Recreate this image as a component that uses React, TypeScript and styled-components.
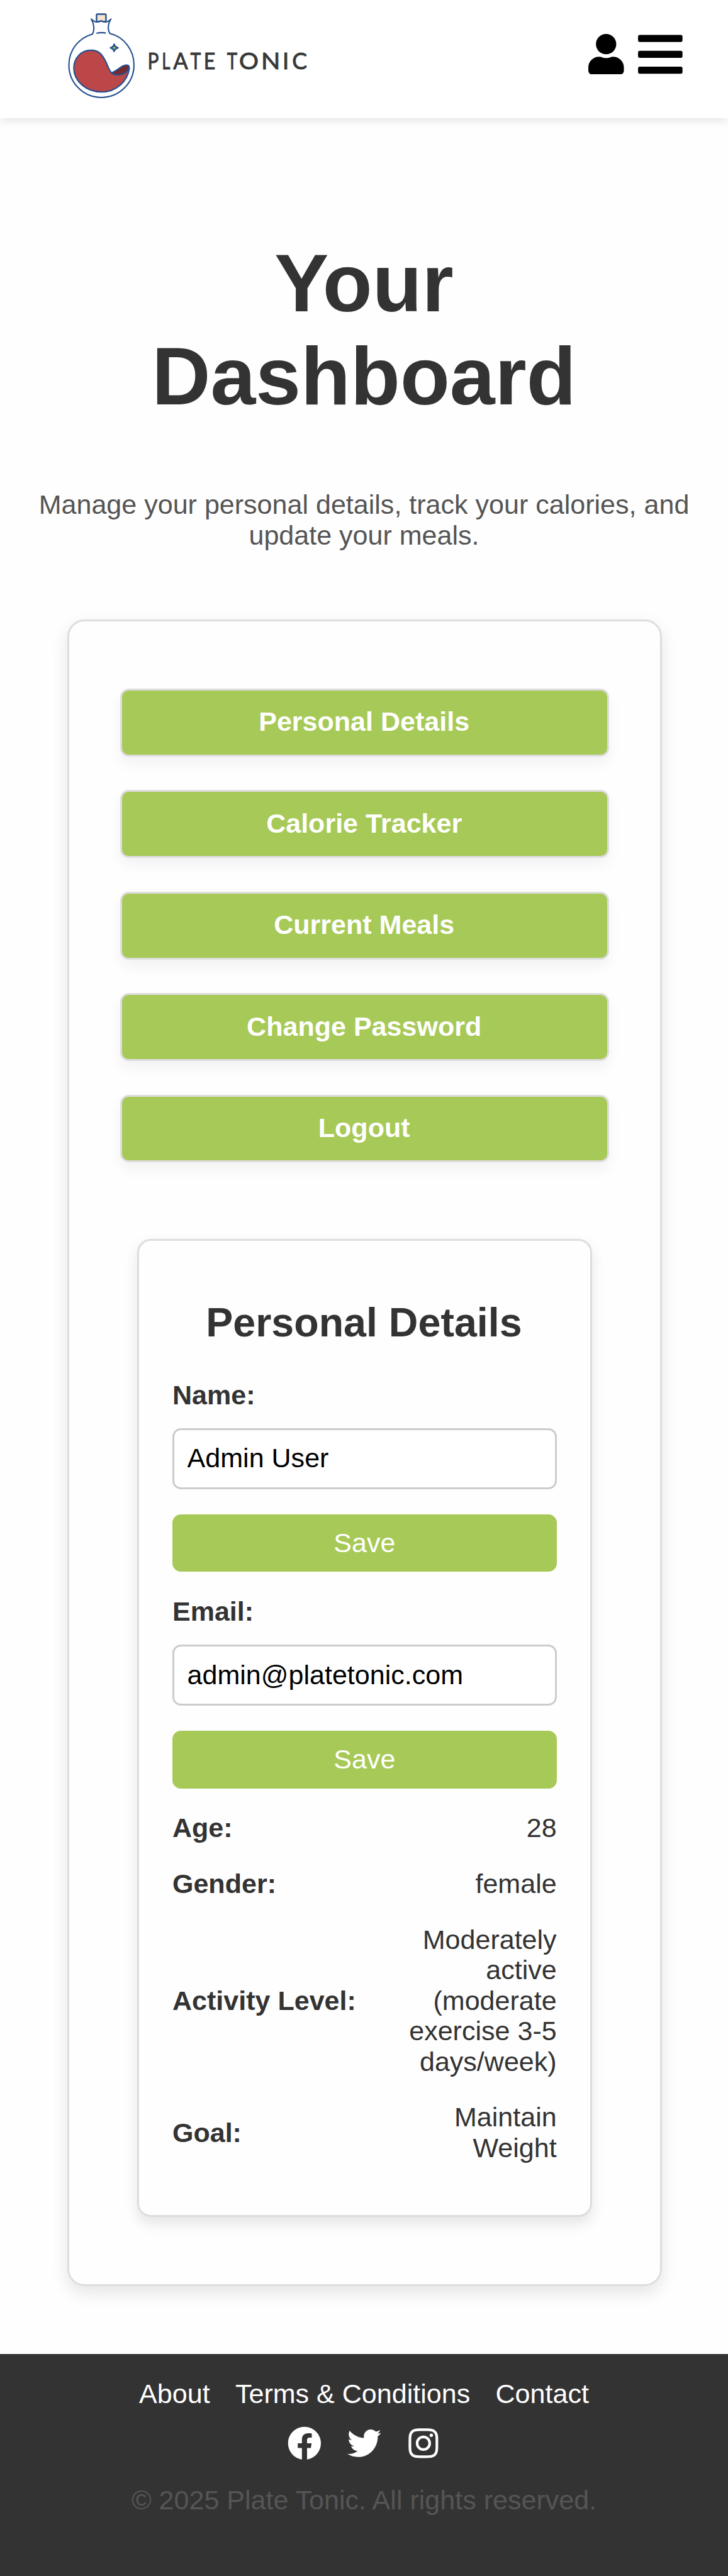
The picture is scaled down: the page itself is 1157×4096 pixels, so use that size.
import React from "react";
import styled, { createGlobalStyle } from "styled-components";
import { FaUser, FaBars, FaFacebook, FaTwitter, FaInstagram } from "react-icons/fa";

// Design units are device pixels of a 1290px wide phone layout.
const SCALE = 1157 / 1290;
const u = (n: number) => `${+(n * SCALE).toFixed(3)}px`;

const GlobalStyle = createGlobalStyle`
  *, *::before, *::after { box-sizing: border-box; }
  html, body { margin: 0; padding: 0; background: #fefefe; }
  body {
    font-family: "Liberation Sans", Arial, sans-serif;
    font-size: ${u(48)};
    line-height: ${u(54)};
    color: #333;
  }
  h1, h2, p { margin: 0; }
`;

const Page = styled.div`
  display: flex;
  flex-direction: column;
  width: 100%;
  height: 4096px;
  overflow: hidden;
`;

const Header = styled.header`
  display: flex;
  align-items: flex-start;
  justify-content: space-between;
  flex: none;
  height: ${u(210)};
  padding: ${u(20)} ${u(75)} 0 ${u(120)};
  background: #fff;
  box-shadow: 0 ${u(6)} ${u(15)} rgba(0, 0, 0, 0.1);
`;

const LogoSvg = styled.svg`
  display: block;
  width: ${u(430)};
  height: ${u(160)};
`;

const HeaderIcons = styled.div`
  display: flex;
  align-items: center;
  gap: ${u(15)};
  height: ${u(152)};
  color: #000;
`;

const HeaderIcon = styled.span<{ $size: number }>`
  display: flex;
  font-size: ${(p) => u(p.$size)};
`;

const Main = styled.main`
  display: flex;
  flex-direction: column;
  align-items: center;
  flex: none;
  height: ${u(3963)};
  padding-top: ${u(210)};
`;

const Heading = styled.h1`
  width: ${u(900)};
  font-size: ${u(144)};
  line-height: ${u(165)};
  text-align: center;
`;

const Intro = styled.p`
  width: ${u(1200)};
  margin-top: ${u(118)};
  text-align: center;
  color: #555;
`;

const Card = styled.section`
  display: flex;
  flex-direction: column;
  align-items: center;
  width: ${u(1053)};
  height: ${u(2955)};
  margin-top: ${u(122)};
  margin-left: ${u(2.4)};
  padding-top: ${u(119.6)};
  border: 3px solid #ddd;
  border-radius: ${u(30)};
  box-shadow: 0 ${u(12)} ${u(30)} rgba(0, 0, 0, 0.1);
`;

const Menu = styled.nav`
  display: flex;
  flex-direction: column;
  gap: ${u(60)};
  width: ${u(867)};
`;

const MenuButton = styled.button`
  height: ${u(120)};
  padding: 0 ${u(2)} ${u(3)} 0;
  border: 3px solid #ddd;
  border-radius: ${u(15)};
  background: #a7c957;
  box-shadow: 0 ${u(12)} ${u(24)} rgba(0, 0, 0, 0.05);
  color: #fff;
  font: bold ${u(48)} / ${u(54)} "Liberation Sans", Arial, sans-serif;
`;

const Details = styled.section`
  display: flex;
  flex-direction: column;
  width: ${u(807)};
  height: ${u(1734)};
  margin-top: ${u(135)};
  padding: ${u(105)} ${u(60)} 0 ${u(59.4)};
  border: 3px solid #ddd;
  border-radius: ${u(24)};
  box-shadow: 0 ${u(12)} ${u(24)} rgba(0, 0, 0, 0.1);
`;

const DetailsTitle = styled.h2`
  margin-bottom: ${u(59.5)};
  padding-right: ${u(2)};
  font-size: ${u(72)};
  line-height: ${u(82)};
  text-align: center;
`;

const Field = styled.div`
  display: flex;
  flex-direction: column;
  margin-bottom: ${u(43)};
`;

const FieldLabel = styled.label`
  font-weight: bold;
`;

const FieldInput = styled.input`
  width: 100%;
  height: ${u(108)};
  margin: ${u(32)} 0 ${u(45)};
  padding: 0 ${u(23)} ${u(1)};
  border: 3px solid #ccc;
  border-radius: ${u(15)};
  background: #fff;
  color: #000;
  font: ${u(48)} "Liberation Sans", Arial, sans-serif;
`;

const SaveButton = styled.button`
  height: ${u(102)};
  padding: 0 0 ${u(2)};
  border: 0;
  border-radius: ${u(15)};
  background: #a7c957;
  color: #fff;
  font: ${u(48)} / ${u(54)} "Liberation Sans", Arial, sans-serif;
`;

const Row = styled.div`
  display: flex;
  align-items: center;
  justify-content: space-between;
  margin-bottom: ${u(45)};
`;

const RowLabel = styled.span`
  font-weight: bold;
`;

const RowValue = styled.span`
  max-width: ${u(285)};
  text-align: right;
`;

const Footer = styled.footer`
  display: flex;
  flex-direction: column;
  align-items: center;
  flex: 1;
  padding-top: ${u(44)};
  background: #333;
`;

const FooterLinks = styled.nav`
  display: flex;
  gap: ${u(45)};
`;

const FooterLink = styled.a`
  color: #fff;
`;

const Socials = styled.div`
  display: flex;
  gap: ${u(45)};
  margin-top: ${u(31)};
  color: #fff;
  font-size: ${u(60)};
`;

const SocialIcon = styled.span`
  display: flex;
  width: ${u(60)};
  height: ${u(60)};
`;

const Copyright = styled.p`
  margin-top: ${u(43)};
  color: #555;
`;

// Wordmark letters: character, baseline x, horizontal stretch.
const LETTERS = [
  ["P", 483, 0.82], ["L", 559.5, 0.71], ["A", 619.5, 0.95], ["T", 710.5, 0.78], ["E", 782, 0.88],
  ["T", 905.5, 0.76], ["O", 970, 1.06], ["N", 1087, 1.09], ["I", 1200.5, 1], ["C", 1251.5, 0.98],
] as const;

const Logo = () => (
  <LogoSvg viewBox="60 60 1290 480" role="img" aria-label="Plate Tonic">
    <g fill="none" stroke="#24508f" strokeWidth="7" strokeLinejoin="round" strokeLinecap="round">
      <path d="M212 114V80q0-5 5-5h40q5 0 5 5v34q-14 3-26-3-12 6-24 3z" fill="#f2e5cb" strokeWidth="8" />
      <path
        d="M190 181C118 201 65 265 65 345C65 441 142 518 237 518C334 518 411 441 411 345C411 265 358 196 283 178C270 158 272 125 289 101C278 113 268 117 257 117C248 117 244 111 236 111C228 111 224 117 215 117C204 117 195 113 184 101C200 128 202 160 190 181Z"
      />
      <path d="M214 176q22-5 45-1" />
      <path
        d="M180 267C225 265 243 292 260 325C274 353 279 376 292 387C310 382 330 364 348 353C368 342 388 345 386 366C376 435 313 489 240 489C155 489 91 430 91 362C91 310 130 267 180 267Z"
        fill="#bc4749"
      />
      <path d="M292 387C310 382 330 364 348 353C368 342 386 344 385 358C374 389 352 398 325 398C308 398 298 393 292 387Z" fill="#762a2e" />
      <path d="M306 235q3 15 20 19-16 4-21 19-3-15-19-19 16-4 20-19z" fill="#a7c957" strokeWidth="8" />
    </g>
    <g fontFamily="Lato, sans-serif" fontSize="122" fontWeight="400" fill="#383838" stroke="#383838" strokeWidth="3">
      {LETTERS.map(([ch, x, stretch]) => (
        <text key={x} transform={`translate(${x} 367) scale(${stretch} 1)`}>{ch}</text>
      ))}
    </g>
  </LogoSvg>
);

const MENU = ["Personal Details", "Calorie Tracker", "Current Meals", "Change Password", "Logout"];

const FIELDS = [
  { label: "Name:", value: "Admin User" },
  { label: "Email:", value: "admin@platetonic.com" },
];

const ROWS = [
  { label: "Age:", value: "28" },
  { label: "Gender:", value: "female" },
  { label: "Activity Level:", value: "Moderately active (moderate exercise 3-5 days/week)" },
  { label: "Goal:", value: "Maintain Weight" },
];

export default function App() {
  return (
    <>
      <GlobalStyle />
      <Page>
        <Header>
          <Logo />
          <HeaderIcons>
            <HeaderIcon $size={72}><FaUser /></HeaderIcon>
            <HeaderIcon $size={90}><FaBars /></HeaderIcon>
          </HeaderIcons>
        </Header>
        <Main>
          <Heading>Your Dashboard</Heading>
          <Intro>Manage your personal details, track your calories, and update your meals.</Intro>
          <Card>
            <Menu>
              {MENU.map((m) => <MenuButton key={m}>{m}</MenuButton>)}
            </Menu>
            <Details>
              <DetailsTitle>Personal Details</DetailsTitle>
              {FIELDS.map((f) => (
                <Field key={f.label}>
                  <FieldLabel>{f.label}</FieldLabel>
                  <FieldInput defaultValue={f.value} />
                  <SaveButton>Save</SaveButton>
                </Field>
              ))}
              {ROWS.map((r) => (
                <Row key={r.label}>
                  <RowLabel>{r.label}</RowLabel>
                  <RowValue>{r.value}</RowValue>
                </Row>
              ))}
            </Details>
          </Card>
        </Main>
        <Footer>
          <FooterLinks>
            <FooterLink>About</FooterLink>
            <FooterLink>Terms &amp; Conditions</FooterLink>
            <FooterLink>Contact</FooterLink>
          </FooterLinks>
          <Socials>
            <SocialIcon><FaFacebook /></SocialIcon>
            <SocialIcon><FaTwitter /></SocialIcon>
            <SocialIcon><FaInstagram /></SocialIcon>
          </Socials>
          <Copyright>© 2025 Plate Tonic. All rights reserved.</Copyright>
        </Footer>
      </Page>
    </>
  );
}
